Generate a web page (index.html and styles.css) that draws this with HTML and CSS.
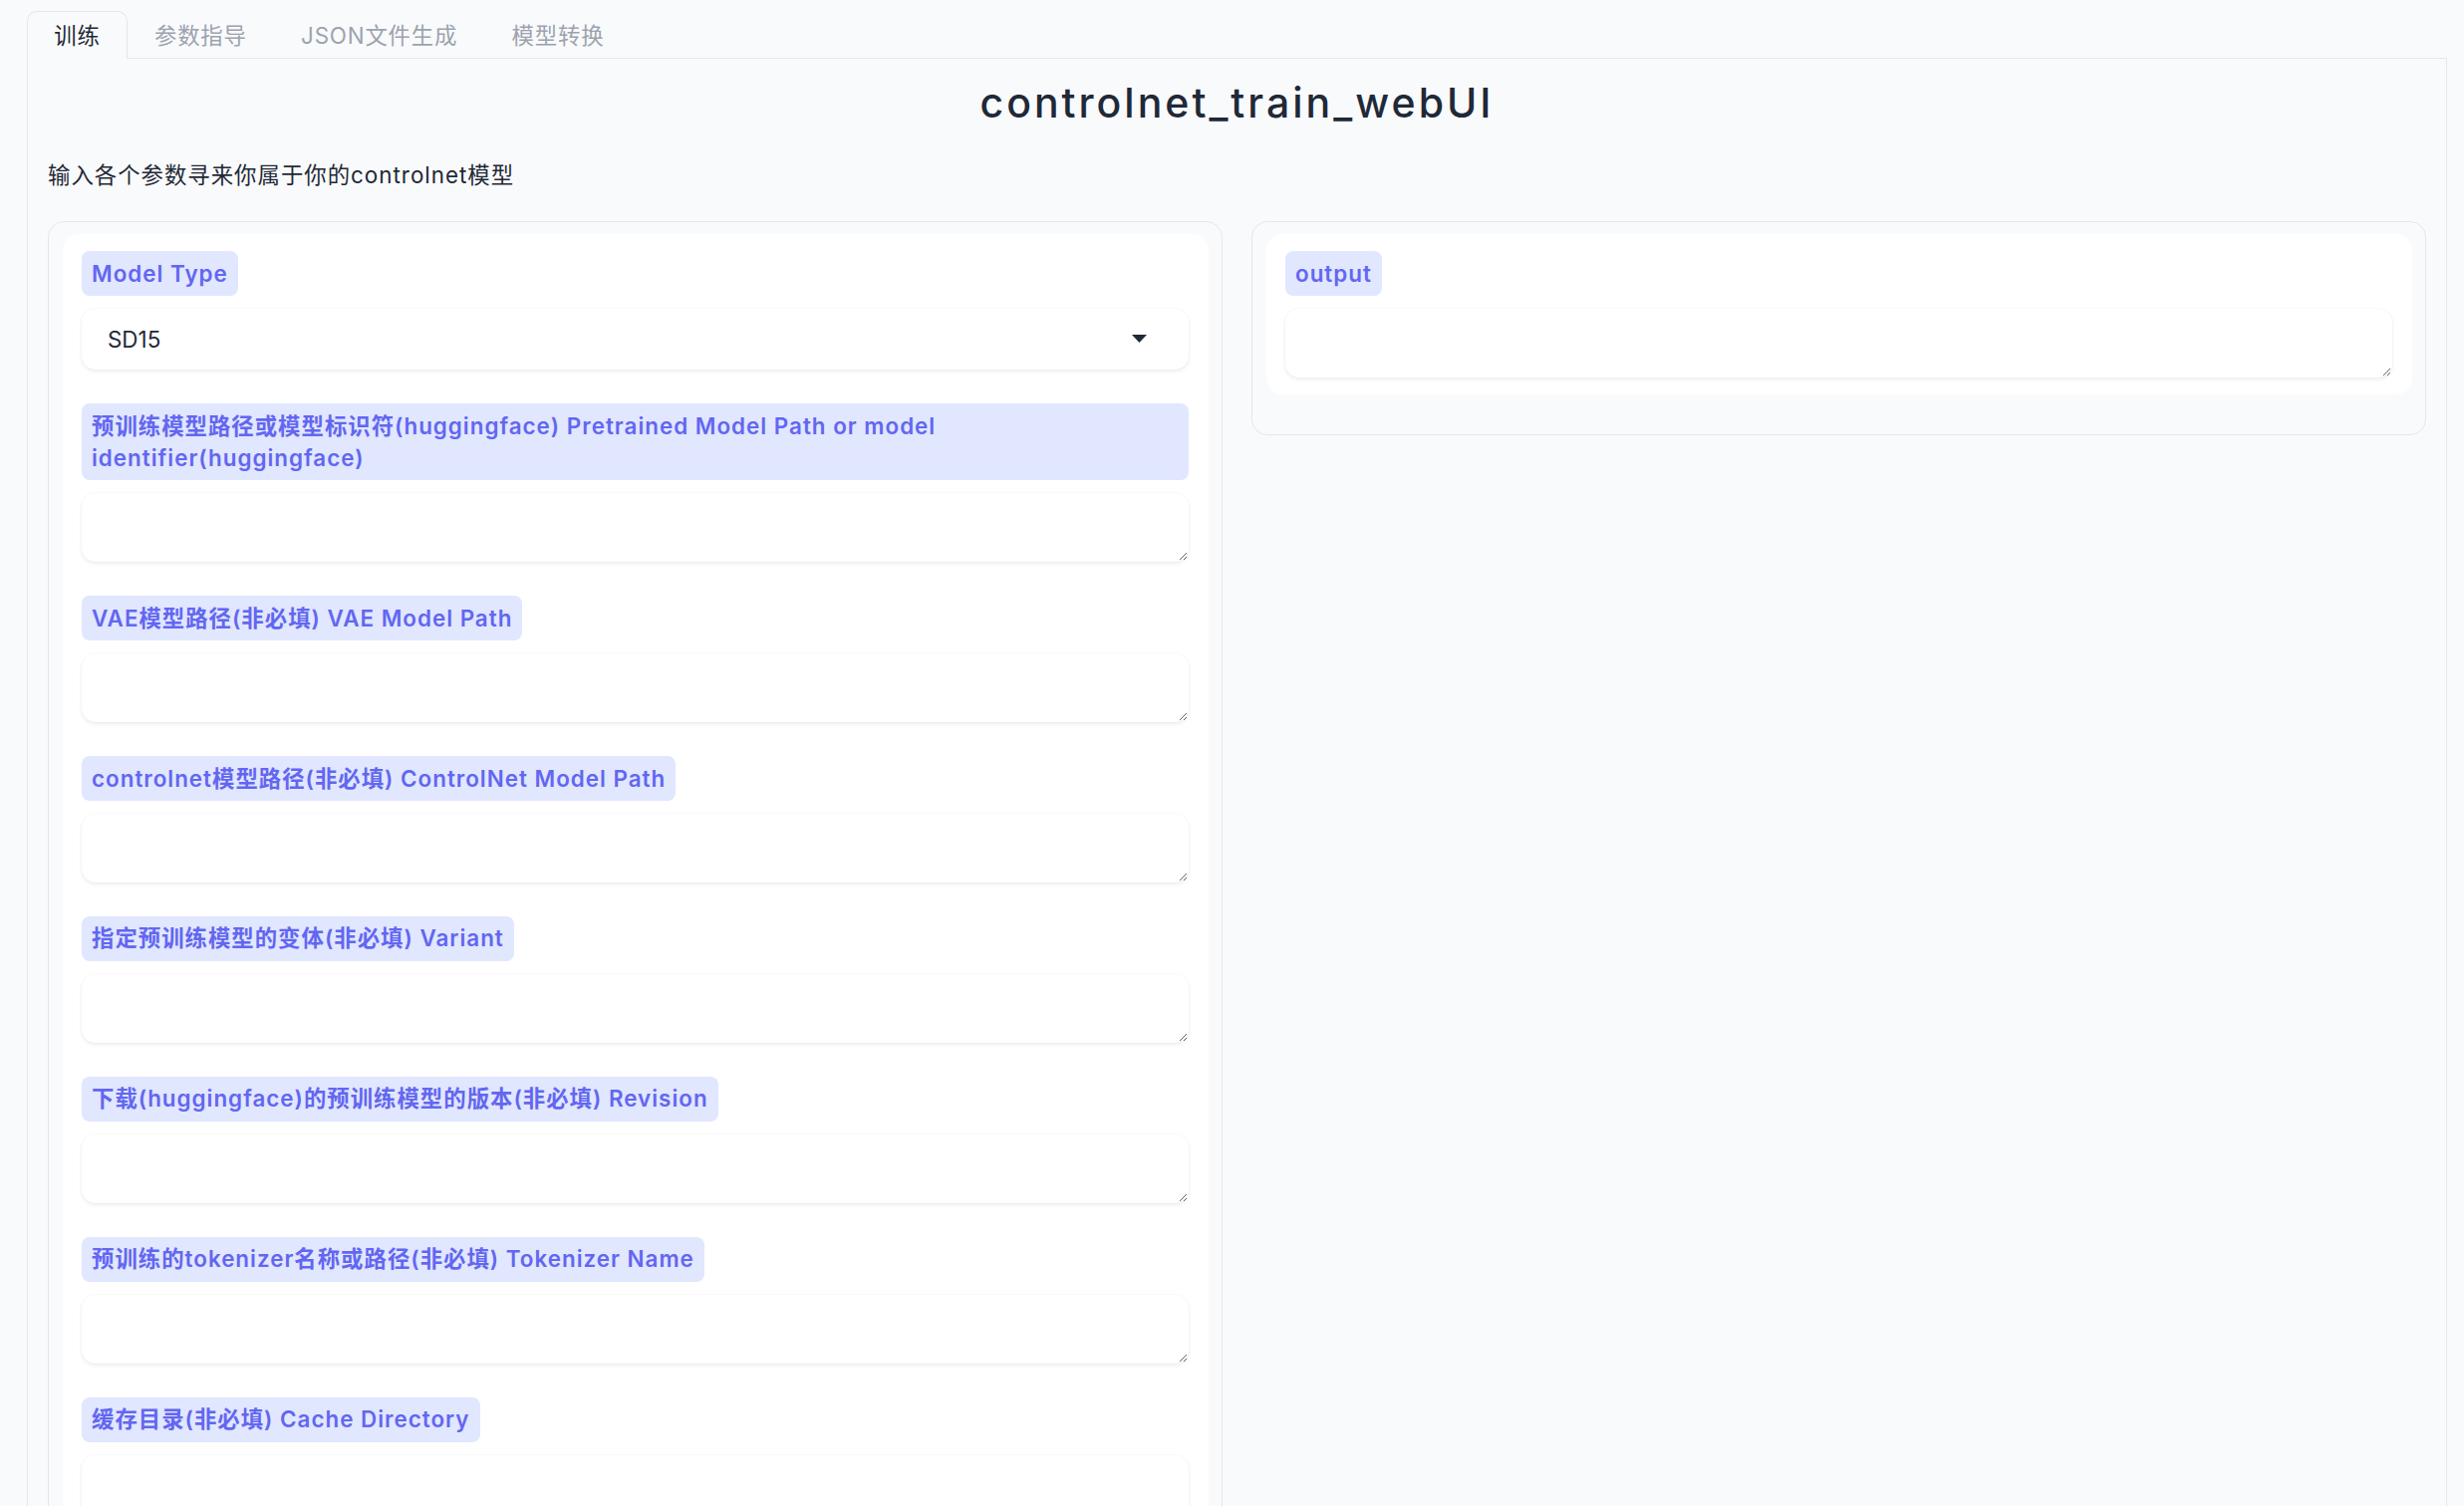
FILE: index.html
```html
<!DOCTYPE html>
<html lang="zh-CN">
<head>
<meta charset="utf-8">
<title>controlnet_train_webUI</title>
<link rel="stylesheet" href="styles.css">
</head>
<body>
<div class="tabs">
  <div class="tab-nav">
    <button class="tab active">训练</button>
    <button class="tab">参数指导</button>
    <button class="tab">JSON文件生成</button>
    <button class="tab">模型转换</button>
  </div>
  <div class="tab-panel">
    <h1 class="title">controlnet_train_webUI</h1>
    <p class="desc">输入各个参数寻来你属于你的controlnet模型</p>
    <div class="row">
      <div class="col">
        <div class="form">
          <div class="block">
            <span class="label">Model Type</span>
            <div class="select">
              <span class="select-value">SD15</span>
              <svg class="caret" width="15" height="8" viewBox="0 0 15 8"><path d="M0 0H15L7.5 8Z" fill="#1f2937"/></svg>
            </div>
          </div>
          <div class="block">
            <span class="label label-wide">预训练模型路径或模型标识符(huggingface) Pretrained Model Path or model<br>identifier(huggingface)</span>
            <textarea class="input" rows="1"></textarea>
          </div>
          <div class="block">
            <span class="label">VAE模型路径(非必填) VAE Model Path</span>
            <textarea class="input" rows="1"></textarea>
          </div>
          <div class="block">
            <span class="label">controlnet模型路径(非必填) ControlNet Model Path</span>
            <textarea class="input" rows="1"></textarea>
          </div>
          <div class="block">
            <span class="label">指定预训练模型的变体(非必填) Variant</span>
            <textarea class="input" rows="1"></textarea>
          </div>
          <div class="block">
            <span class="label">下载(huggingface)的预训练模型的版本(非必填) Revision</span>
            <textarea class="input" rows="1"></textarea>
          </div>
          <div class="block">
            <span class="label">预训练的tokenizer名称或路径(非必填) Tokenizer Name</span>
            <textarea class="input" rows="1"></textarea>
          </div>
          <div class="block">
            <span class="label">缓存目录(非必填) Cache Directory</span>
            <textarea class="input" rows="1"></textarea>
          </div>
        </div>
      </div>
      <div class="col col-output">
        <div class="form">
          <div class="block">
            <span class="label">output</span>
            <textarea class="input" rows="1"></textarea>
          </div>
        </div>
      </div>
    </div>
  </div>
</div>
</body>
</html>
```
FILE: styles.css
```css
html, body {
  margin: 0;
  padding: 0;
  background: #f9fafb;
}
body {
  font-family: "Inter", "Noto Sans CJK SC", sans-serif;
  color: #1f2937;
  font-size: 22.4px;
}
.tabs {
  margin: 11px 17px 0 27px;
}
.tab-nav {
  display: flex;
  height: 47px;
  border-bottom: 1px solid #e5e7eb;
}
.tab {
  font-family: inherit;
  font-size: 22.4px;
  line-height: 46px;
  height: 48px;
  padding: 0 26.2px;
  margin: 0 0 -1px 0;
  border: 1px solid transparent;
  border-bottom: none;
  background: transparent;
  color: #9ca3af;
  border-radius: 10px 10px 0 0;
  letter-spacing: 0.8px;
  cursor: pointer;
}
.tab.active {
  color: #1f2937;
  border-color: #e5e7eb;
  background: #f9fafb;
}
.tab-panel {
  border: 1px solid #e5e7eb;
  border-top: none;
  padding: 0 20px;
  min-height: 1500px;
}
.title {
  margin: 0;
  padding-top: 20px;
  text-align: center;
  font-size: 41px;
  font-weight: 500;
  line-height: 48px;
  letter-spacing: 3px;
  color: #1f2937;
}
.desc {
  margin: 32px 0 0 0;
  font-size: 22.4px;
  line-height: 33.6px;
  letter-spacing: 1px;
}
.row {
  display: flex;
  gap: 29px;
  margin-top: 29px;
  align-items: flex-start;
}
.col {
  flex: 1 1 0;
  min-width: 0;
  border: 1px solid #e5e7eb;
  border-radius: 16px;
  background: #f9fafb;
  padding: 12.5px 13.5px;
}
.col-output {
  padding-bottom: 40px;
}
.form {
  background: #ffffff;
  border-radius: 16px;
}
.block {
  padding: 17.2px 19.5px;
}
.label {
  display: inline-block;
  background: #e0e7ff;
  color: #6366f1;
  font-weight: 600;
  font-size: 22.4px;
  line-height: 32px;
  padding: 6.4px 10px;
  border-radius: 8px;
  margin-bottom: 12.8px;
  letter-spacing: 1px;
}
.label-wide {
  display: block;
}
.select {
  display: flex;
  align-items: center;
  justify-content: space-between;
  height: 61px;
  box-sizing: border-box;
  padding: 0 42px 0 26px;
  background: #ffffff;
  border-radius: 14px;
  box-shadow: 0 2px 4px rgba(0, 0, 0, 0.07), 0 0 2px rgba(0, 0, 0, 0.05);
}
.select-value {
  font-size: 22.4px;
  color: #1f2937;
}
.caret {
  display: block;
}
.input {
  display: block;
  width: 100%;
  box-sizing: border-box;
  height: 69px;
  padding: 16px;
  border: 1px solid transparent;
  border-radius: 14px;
  background: #ffffff;
  font-family: inherit;
  font-size: 22.4px;
  line-height: 33.6px;
  color: #1f2937;
  resize: vertical;
  outline: none;
  box-shadow: 0 2px 4px rgba(0, 0, 0, 0.07), 0 0 2px rgba(0, 0, 0, 0.05);
}
```
